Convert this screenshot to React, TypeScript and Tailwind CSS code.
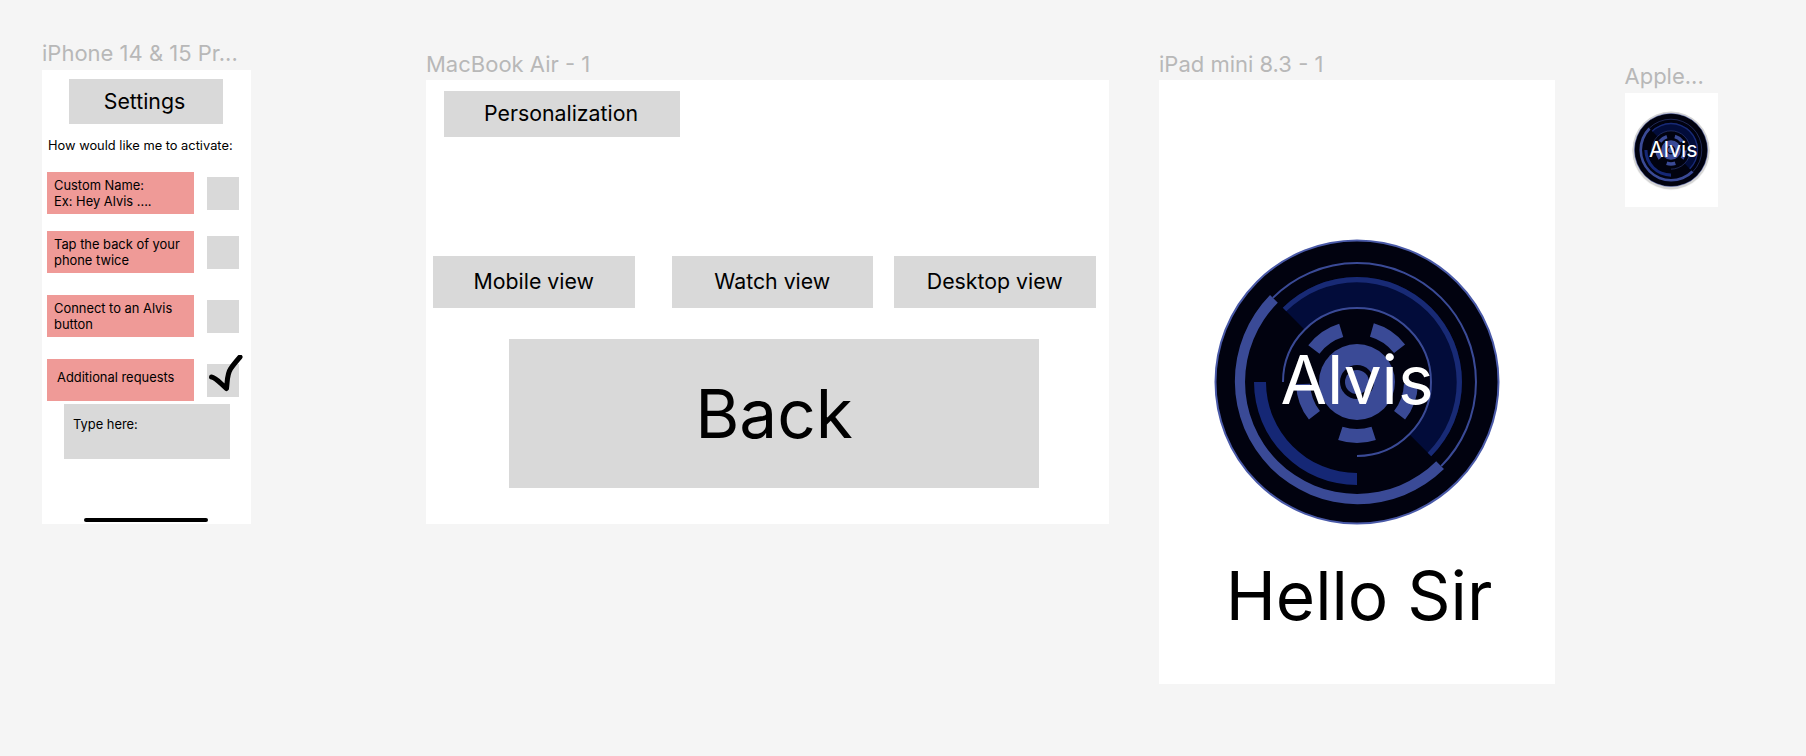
const FONT = "font-['Inter',sans-serif]";

// clockwise from 12 o'clock, in degrees
function pt(r: number, a: number) {
  const t = (a * Math.PI) / 180;
  return `${(r * Math.sin(t)).toFixed(2)} ${(-r * Math.cos(t)).toFixed(2)}`;
}

function arc(r: number, from: number, to: number) {
  const large = to - from > 180 ? 1 : 0;
  return `M${pt(r, from)}A${r} ${r} 0 ${large} 1 ${pt(r, to)}`;
}

function sector(r1: number, r2: number, from: number, to: number) {
  const large = to - from > 180 ? 1 : 0;
  return `M${pt(r2, from)}A${r2} ${r2} 0 ${large} 1 ${pt(r2, to)}L${pt(r1, to)}A${r1} ${r1} 0 ${large} 0 ${pt(r1, from)}Z`;
}

const BLUE = "#3a4a96";
const DARK = "#01020f";
const segments = [
  [-53, -17],
  [16, 52],
  [92, 128],
  [162, 198],
  [232, 268],
];

function Logo({ className }: { className: string }) {
  return (
    <svg viewBox="-143 -143 286 286" className={className}>
      <circle r="141.5" fill={DARK} stroke="#4a5aa8" strokeWidth="2" />
      <path d={arc(119, -45, 135)} fill="none" stroke={BLUE} strokeWidth="2" />
      <path d={sector(112, 123, 135, 315)} fill={BLUE} />
      <path d={sector(74, 105, -45, 135)} fill="#020c3a" />
      <path d={sector(100, 105, -45, 135)} fill="#182a75" />
      <path d={arc(74, -90, 180)} fill="none" stroke={BLUE} strokeWidth="2" />
      <path d={sector(91, 103, 180, 270)} fill="#152775" />
      {segments.map(([a, b]) => (
        <path key={a} d={sector(47, 61, a, b)} fill={BLUE} />
      ))}
      <circle r="38" fill={BLUE} />
      <circle r="17" fill={DARK} />
      <circle r="12" fill={BLUE} />
    </svg>
  );
}

function Label({ children }: { children: string }) {
  return <div className="h-[24px] text-[22px] leading-[24px] text-[#b8b8b8] whitespace-nowrap">{children}</div>;
}

function Option({ lines, check, indent }: { lines: string[]; check?: boolean; indent?: boolean }) {
  return (
    <div className="flex items-center">
      <div className={`w-[147px] h-[42px] bg-[#ef9a97] flex flex-col justify-center text-[12.9px] leading-[15.5px] text-black ${indent ? "pl-[10px] pb-[4px]" : "pl-[7px] pt-[1px]"}`}>
        {lines.map((l) => (
          <div key={l}>{l}</div>
        ))}
      </div>
      <div className="relative ml-[13px] w-[32px] h-[33px] bg-[#d9d9d9]">
        {check && (
          <svg viewBox="0 0 38 42" className="absolute left-[2px] top-[-9px] w-[38px] h-[42px]" fill="none">
            <path d="M2.5 22C7 22.5 12 29 17.5 33.5C18.5 26 18 19 21.5 14C24 10 27.5 6 31 2" stroke="#000" strokeWidth="5" strokeLinecap="round" strokeLinejoin="round" />
          </svg>
        )}
      </div>
    </div>
  );
}

function Tile({ children, className }: { children: string; className: string }) {
  return <div className={`flex items-center justify-center bg-[#d9d9d9] text-black ${className}`}>{children}</div>;
}

export default function App() {
  return (
    <div className={`w-[1806px] h-[756px] overflow-hidden bg-[#f5f5f5] flex items-start pl-[42px] ${FONT}`}>
      {/* iPhone frame */}
      <div className="mt-[41px] w-[209px]">
        <Label>iPhone 14 &amp; 15 Pr...</Label>
        <div className="mt-[5px] h-[454px] bg-white pt-[9px] flex flex-col">
          <Tile className="ml-[27px] w-[154px] h-[45px] pr-[3px] text-[21.3px]">Settings</Tile>
          <div className="ml-[6px] mt-[13px] text-[12.85px] leading-[18px] text-black">How would like me to activate:</div>
          <div className="ml-[5px] mt-[17px] flex flex-col">
            <Option lines={["Custom Name:", "Ex: Hey Alvis ...."]} />
            <div className="mt-[17px]">
              <Option lines={["Tap the back of your", "phone twice"]} />
            </div>
            <div className="mt-[22px]">
              <Option lines={["Connect to an Alvis", "button"]} />
            </div>
            <div className="mt-[22px]">
              <Option lines={["Additional requests"]} check indent />
            </div>
          </div>
          <div className="ml-[22px] mt-[3px] w-[166px] h-[55px] bg-[#d9d9d9] pl-[9px] pt-[13px] text-[12.9px] leading-[16px] text-black">Type here:</div>
          <div className="ml-[42px] mt-[59px] w-[124px] h-[4px] rounded-full bg-black" />
        </div>
      </div>

      {/* MacBook frame */}
      <div className="ml-[175px] mt-[52px] w-[683px]">
        <Label>MacBook Air - 1</Label>
        <div className="mt-[4px] h-[444px] bg-white pt-[11px] pl-[7px]">
          <Tile className="ml-[11px] w-[236px] h-[46px] pr-[2px] text-[21.3px]">Personalization</Tile>
          <div className="mt-[119px] flex">
            <Tile className="w-[201.5px] h-[52px] text-[21.3px]">Mobile view</Tile>
            <Tile className="ml-[37px] w-[201.5px] h-[52px] text-[21.3px]">Watch view</Tile>
            <Tile className="ml-[21px] w-[201.5px] h-[52px] text-[21.3px]">Desktop view</Tile>
          </div>
          <Tile className="ml-[76px] mt-[31px] w-[530px] h-[149px] text-[67.5px]">Back</Tile>
        </div>
      </div>

      {/* iPad frame */}
      <div className="ml-[50px] mt-[52px] w-[396px]">
        <Label>iPad mini 8.3 - 1</Label>
        <div className="mt-[4px] h-[604px] bg-white flex flex-col items-center pt-[159px]">
          <div className="relative w-[286px] h-[286px] flex items-center justify-center">
            <Logo className="absolute inset-0 w-full h-full" />
            <span className="relative -top-[2px] text-[67.5px] leading-none text-white">Alvis</span>
          </div>
          <div className="ml-[4px] mt-[27px] text-[67.5px] leading-[87px] text-black">Hello Sir</div>
        </div>
      </div>

      {/* Apple Watch frame */}
      <div className="ml-[69.5px] mt-[64px] w-[93.5px]">
        <Label>Apple...</Label>
        <div className="mt-[5px] h-[114px] bg-white flex justify-center pt-[20px]">
          <div className="relative w-[74px] h-[74px] rounded-full flex items-center justify-center shadow-[0_0_0_1.5px_#d4d4d4,0_1px_1px_1.5px_#d4d4d4]">
            <Logo className="absolute inset-0 w-full h-full" />
            <span className="relative left-[2px] text-[21.3px] leading-none text-white">Alvis</span>
          </div>
        </div>
      </div>
    </div>
  );
}
